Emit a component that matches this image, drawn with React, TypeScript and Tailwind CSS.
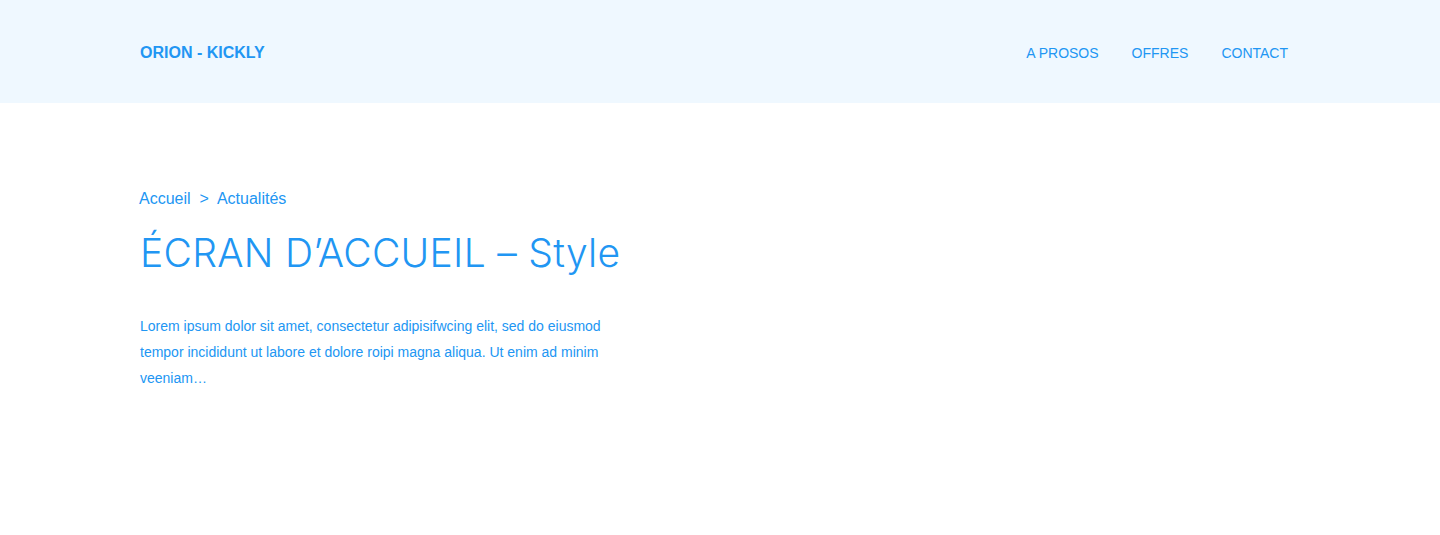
export default function App() {
  return (
    <div className="min-h-[535px] bg-white text-[#2196f3] font-['Liberation_Sans',Arial,sans-serif]">
      <header className="h-[103px] bg-[#eff8ff]">
        <div className="h-full pt-[3px] pl-[140px] pr-[152px] flex items-center justify-between">
          <a className="text-[16px] font-bold">ORION - KICKLY</a>
          <nav className="flex items-center gap-[33px] text-[14px]">
            <a>A PROSOS</a>
            <a>OFFRES</a>
            <a>CONTACT</a>
          </nav>
        </div>
      </header>

      <main className="pl-[139px] pt-[86px]">
        <div className="text-[16px] flex gap-[8px] leading-[20px]">
          <span>Accueil</span>
          <span className="pl-[1px]">&gt;</span>
          <span>Actualités</span>
        </div>
        <h1 className="mt-[20px] pl-[1px] text-[39px] leading-[48px] font-light tracking-[0.3px] font-['Inter',sans-serif]">
          ÉCRAN D’ACCUEIL – Style
        </h1>
        <p className="mt-[36px] pl-[1px] w-[480px] text-[14px] leading-[26px]">
          Lorem ipsum dolor sit amet, consectetur adipisifwcing elit, sed do eiusmod tempor incididunt ut labore et
          dolore roipi magna aliqua. Ut enim ad minim veeniam…
        </p>
      </main>
    </div>
  );
}
